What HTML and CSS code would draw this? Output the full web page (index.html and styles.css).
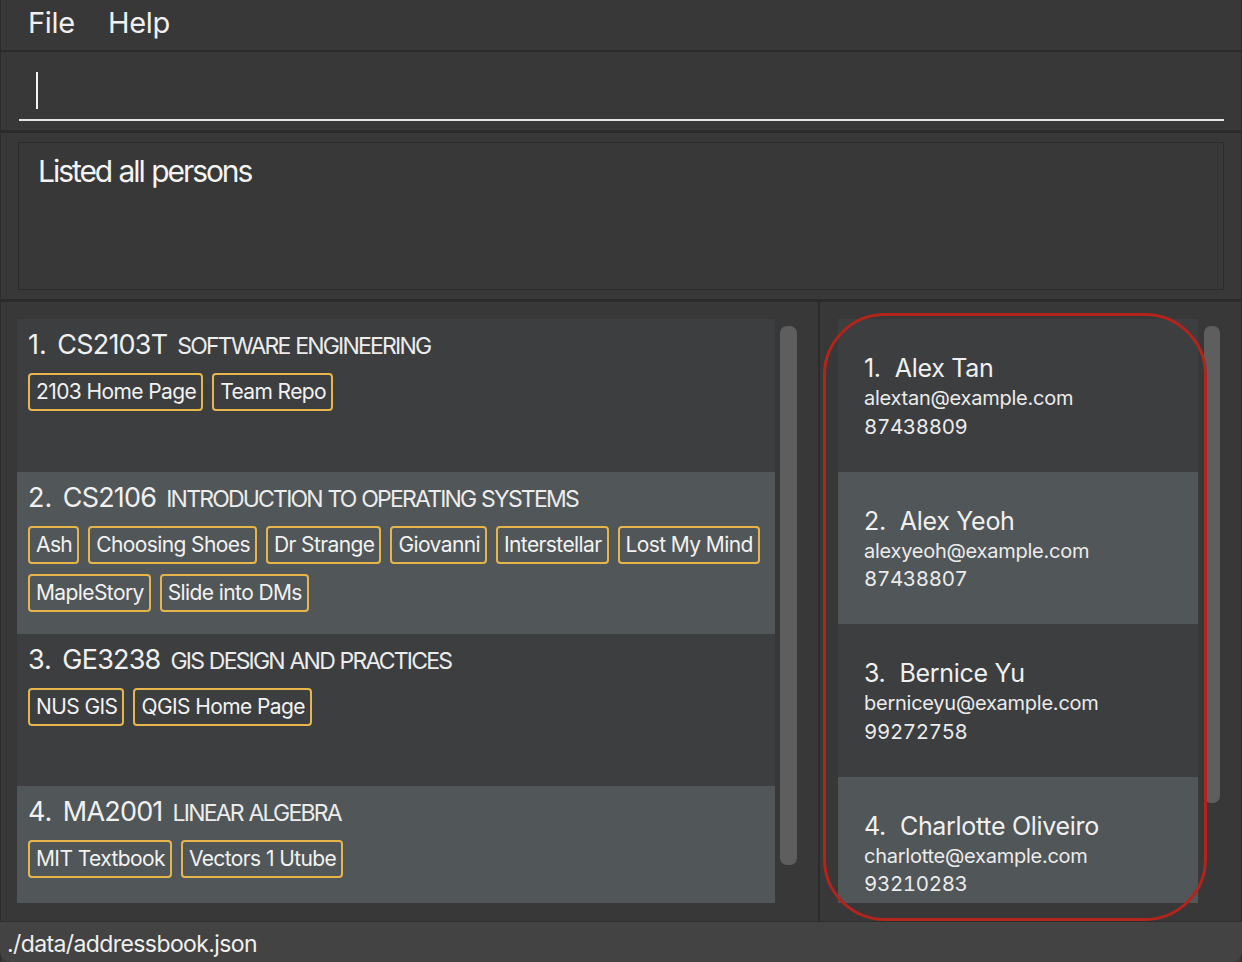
FILE: index.html
```html
<!DOCTYPE html>
<html lang="en">
<head>
<meta charset="utf-8">
<title>Address Book</title>
<link rel="stylesheet" href="styles.css">
</head>
<body>
<div class="window">
  <div class="menubar">
    <span class="menu-item">File</span>
    <span class="menu-item">Help</span>
  </div>
  <div class="divider"></div>
  <div class="command-pane">
    <div class="command-field"><span class="caret"></span></div>
  </div>
  <div class="divider divider-thick"></div>
  <div class="result-pane">
    <div class="result-box">Listed all persons</div>
  </div>
  <div class="divider divider-thick"></div>
  <div class="lists">
    <div class="list-pane list-left">
      <div class="viewport">
        <div class="module-cell">
          <div class="title-row"><span class="idx">1.</span><span class="code">CS2103T</span><span class="mname">SOFTWARE ENGINEERING</span></div>
          <div class="tags"><span class="tag">2103 Home Page</span><span class="tag">Team Repo</span></div>
        </div>
        <div class="module-cell alt">
          <div class="title-row"><span class="idx">2.</span><span class="code">CS2106</span><span class="mname">INTRODUCTION TO OPERATING SYSTEMS</span></div>
          <div class="tags"><span class="tag">Ash</span><span class="tag">Choosing Shoes</span><span class="tag">Dr Strange</span><span class="tag">Giovanni</span><span class="tag">Interstellar</span><span class="tag">Lost My Mind</span><span class="tag">MapleStory</span><span class="tag">Slide into DMs</span></div>
        </div>
        <div class="module-cell">
          <div class="title-row"><span class="idx">3.</span><span class="code">GE3238</span><span class="mname">GIS DESIGN AND PRACTICES</span></div>
          <div class="tags"><span class="tag">NUS GIS</span><span class="tag">QGIS Home Page</span></div>
        </div>
        <div class="module-cell alt">
          <div class="title-row"><span class="idx">4.</span><span class="code">MA2001</span><span class="mname">LINEAR ALGEBRA</span></div>
          <div class="tags"><span class="tag">MIT Textbook</span><span class="tag">Vectors 1 Utube</span></div>
        </div>
      </div>
      <div class="track"><div class="thumb thumb-left"></div></div>
    </div>
    <div class="vdivider"></div>
    <div class="list-pane list-right">
      <div class="viewport">
        <div class="person-cell">
          <div class="pname"><span class="pidx">1.</span>Alex Tan</div>
          <div class="pline">alextan@example.com</div>
          <div class="pline phone">87438809</div>
        </div>
        <div class="person-cell alt">
          <div class="pname"><span class="pidx">2.</span>Alex Yeoh</div>
          <div class="pline">alexyeoh@example.com</div>
          <div class="pline phone">87438807</div>
        </div>
        <div class="person-cell">
          <div class="pname"><span class="pidx">3.</span>Bernice Yu</div>
          <div class="pline">berniceyu@example.com</div>
          <div class="pline phone">99272758</div>
        </div>
        <div class="person-cell alt">
          <div class="pname"><span class="pidx">4.</span>Charlotte Oliveiro</div>
          <div class="pline">charlotte@example.com</div>
          <div class="pline phone">93210283</div>
        </div>
      </div>
      <div class="track"><div class="thumb thumb-right"></div></div>
      <div class="highlight"></div>
    </div>
  </div>
  <div class="statusbar">./data/addressbook.json</div>
</div>
</body>
</html>
```

FILE: styles.css
```css
html, body {
  margin: 0;
  padding: 0;
  background: #383838;
}
body {
  width: 1242px;
  height: 962px;
  overflow: hidden;
  font-family: Inter, "Liberation Sans", sans-serif;
  color: #efefef;
}
.window {
  display: flex;
  flex-direction: column;
  width: 1242px;
  height: 962px;
  background: #383838;
  box-shadow: inset 1px 0 0 #2c2c2c, inset -1px 0 0 #2c2c2c;
}
.menubar {
  box-sizing: border-box;
  height: 50px;
  display: flex;
  align-items: flex-start;
  padding: 5px 0 0 28px;
  gap: 33px;
  font-size: 29px;
  line-height: 36px;
  letter-spacing: -0.3px;
  color: #f0f0f0;
}
.divider {
  height: 2px;
  background: #2b2b2b;
  flex: none;
}
.divider-thick {
  height: 3px;
}
.command-pane {
  box-sizing: border-box;
  height: 78px;
  padding: 10px 18px 0 19px;
  flex: none;
}
.command-field {
  box-sizing: border-box;
  height: 59px;
  border-bottom: 2px solid #e4e4e4;
  padding: 10px 0 0 17px;
}
.caret {
  display: block;
  width: 2px;
  height: 37px;
  background: #f4f4f4;
}
.result-pane {
  box-sizing: border-box;
  height: 166px;
  padding: 9px 18px 9px 18px;
  flex: none;
}
.result-box {
  box-sizing: border-box;
  height: 148px;
  border: 1px solid #2c2c2c;
  padding: 10px 19px;
  font-size: 30px;
  line-height: 36px;
  letter-spacing: -2.05px;
  word-spacing: 1px;
  color: #f4f4f4;
}
.lists {
  position: relative;
  display: flex;
  height: 619px;
  flex: none;
}
.vdivider {
  width: 2px;
  background: #2b2b2b;
  flex: none;
}
.list-pane {
  position: relative;
  box-sizing: border-box;
  display: flex;
  padding: 17px 0 18px 0;
}
.list-left {
  width: 818px;
  padding-left: 17px;
  padding-right: 21px;
  gap: 5px;
}
.list-right {
  width: 422px;
  padding-left: 18px;
  padding-right: 22px;
  gap: 6px;
}
.viewport {
  flex: 1;
  overflow: hidden;
}
.track {
  width: 17px;
  flex: none;
  padding-top: 7px;
}
.list-right .track {
  width: 16px;
}
.thumb {
  background: #5e5e5e;
  border-radius: 7px;
}
.thumb-left { height: 539px; }
.thumb-right { height: 477px; }

.module-cell {
  box-sizing: border-box;
  min-height: 152.67px;
  background: #3c3e40;
  padding: 9px 10px 22px 11px;
}
.alt {
  background: #515658;
}
.title-row {
  display: flex;
  align-items: baseline;
  line-height: 34px;
  white-space: nowrap;
}
.idx {
  font-size: 27px;
  margin-right: 10.5px;
  color: #f0f0f0;
}
.code {
  font-size: 27px;
  letter-spacing: -0.8px;
  margin-right: 10px;
  color: #f0f0f0;
}
.mname {
  font-size: 23px;
  letter-spacing: -1.8px;
  word-spacing: 1px;
  color: #ececec;
}
.tags {
  display: flex;
  flex-wrap: wrap;
  gap: 10px 9px;
  margin-top: 10px;
}
.tag {
  border: 2px solid #e6b64c;
  border-radius: 4px;
  padding: 2px 5px 2px 6px;
  font-size: 21px;
  line-height: 30px;
  letter-spacing: -0.6px;
  color: #f2f2f2;
}

.person-cell {
  box-sizing: border-box;
  min-height: 152.67px;
  background: #3c3e40;
  padding: 33px 10px 0 26px;
}
.person-cell.alt {
  background: #515658;
}
.pname {
  font-size: 25px;
  line-height: 32px;
  letter-spacing: -0.3px;
  color: #f0f0f0;
  white-space: nowrap;
}
.pidx {
  margin-right: 14px;
}
.pline {
  font-size: 20px;
  line-height: 28.5px;
  letter-spacing: -0.25px;
  color: #ebebeb;
}
.phone {
  font-feature-settings: "tnum";
  font-size: 20.5px;
  letter-spacing: -0.35px;
}
.highlight {
  position: absolute;
  left: 3px;
  top: 11px;
  width: 384px;
  height: 608px;
  box-sizing: border-box;
  border: 3px solid #b2241c;
  border-radius: 62px;
  pointer-events: none;
}
.statusbar {
  box-sizing: border-box;
  height: 41px;
  flex: none;
  background: #434343;
  border-top: 1px solid #2e2e2e;
  padding: 5px 0 0 7px;
  font-size: 23px;
  line-height: 35px;
  letter-spacing: -0.6px;
  color: #f0f0f0;
  border-radius: 0 0 10px 10px;
}
```
